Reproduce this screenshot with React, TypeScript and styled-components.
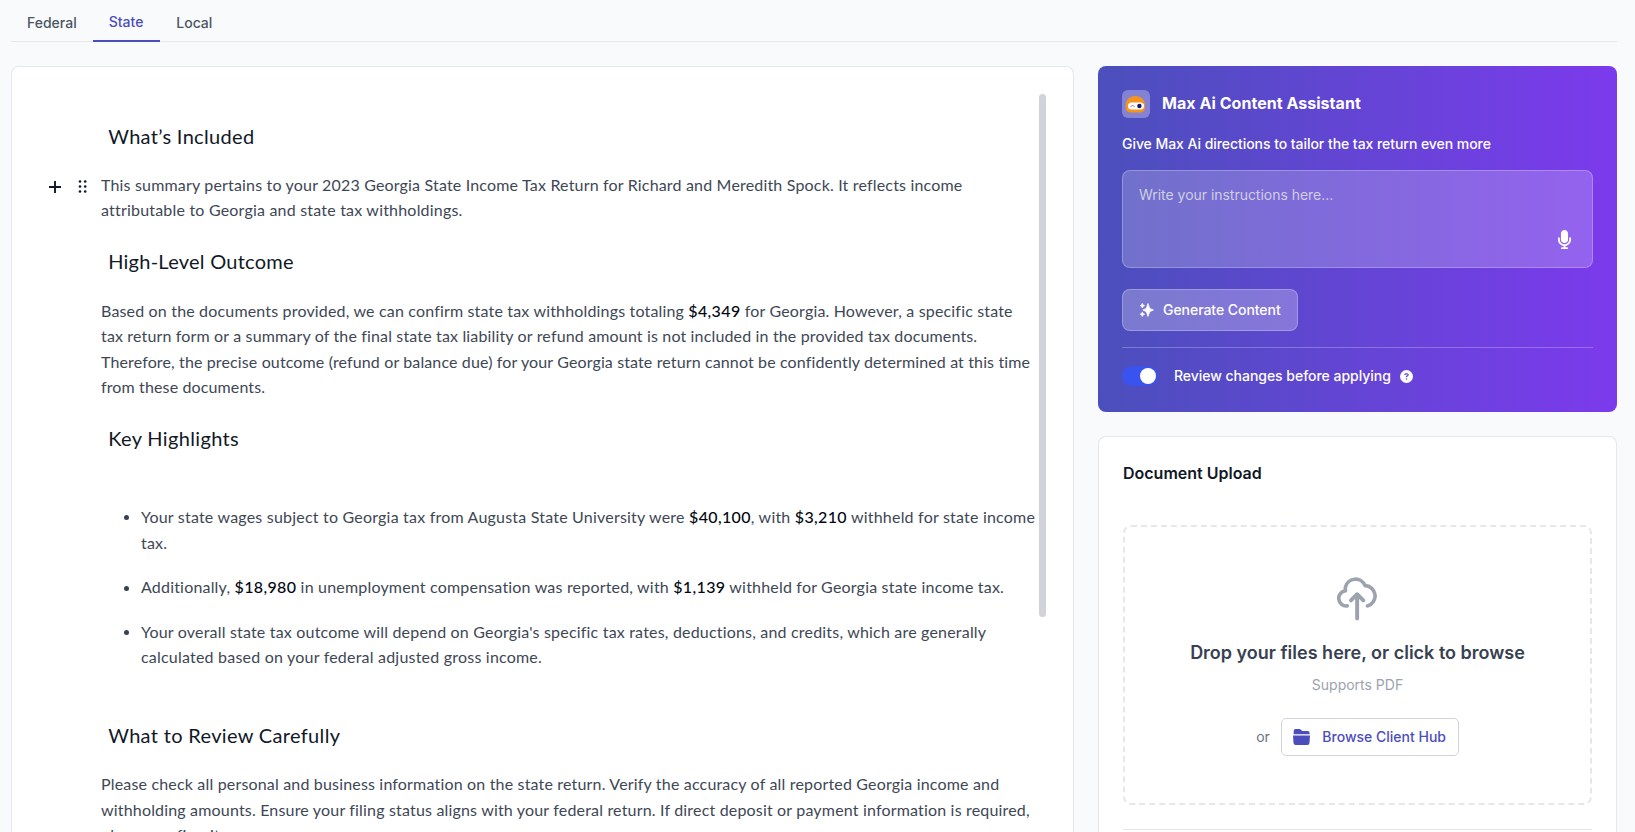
import React from "react";
import styled, { createGlobalStyle } from "styled-components";
import { FaMicrophone, FaCircleQuestion } from "react-icons/fa6";

const brand = "#4b4dbd";

const GlobalStyle = createGlobalStyle`
  *, *::before, *::after { box-sizing: border-box; }
  body {
    margin: 0;
    background: #f9fafb;
    font-family: Inter, "Liberation Sans", sans-serif;
    overflow: hidden;
  }
  h2, h3, p, ul { margin: 0; padding: 0; font-weight: inherit; }
  button, textarea { font: inherit; margin: 0; }
`;

const Page = styled.div`
  height: 100vh;
  padding: 0 18px 0 11px;
  overflow: hidden;
  display: flex;
  flex-direction: column;
  gap: 24px;
`;

const Tabs = styled.nav`
  flex: none;
  height: 42px;
  display: flex;
  border-bottom: 1px solid #e5e7eb;
`;

const Tab = styled.a<{ $active?: boolean }>`
  height: 42px;
  min-width: 67.6px;
  padding: ${(p) => (p.$active ? "12px" : "13px")} 16px 0;
  font-size: 14px;
  line-height: 20px;
  font-weight: 500;
  color: ${(p) => (p.$active ? brand : "#4b5563")};
  border-bottom: ${(p) => (p.$active ? `2px solid ${brand}` : "0")};
`;

const Columns = styled.main`
  flex: 1;
  min-height: 0;
  display: grid;
  grid-template-columns: 1063px 519px;
  gap: 24px;
`;

const EditorCard = styled.section`
  display: flex;
  min-height: 0;
  padding: 27px 27px 0 0;
  background: #fff;
  border: 1px solid #e5e7eb;
  border-bottom: 0;
  border-radius: 8px 8px 0 0;
`;

const Editor = styled.div`
  flex: 1;
  min-width: 0;
  overflow: hidden;
  padding-top: 28px;
  font-family: Lato, "Liberation Sans", sans-serif;
`;

const ScrollThumb = styled.div`
  flex: none;
  width: 7px;
  height: 523px;
  border-radius: 4px;
  background: #d1d3d9;
`;

const Block = styled.div`
  display: grid;
  grid-template-columns: 89px 1fr;
`;

const Gutter = styled.div`
  display: flex;
  align-items: center;
  justify-content: space-between;
  height: 30px;
  padding: 0 14px 0 37px;
`;

const Heading = styled.h2<{ $track: number }>`
  margin: 24.2px 0 22.6px 7.2px;
  font-size: 20px;
  line-height: 28px;
  letter-spacing: ${(p) => p.$track}px;
  color: #111827;
  ${Block}:first-child > & { margin-top: 0; margin-bottom: 21.6px; }
`;

const Paragraph = styled.p`
  font-size: 16px;
  line-height: 25.6px;
  color: #3e4755;
`;

const Line = styled.span<{ $track: number }>`
  display: block;
  white-space: nowrap;
  letter-spacing: ${(p) => p.$track}px;
`;

const Amount = styled.strong`
  font-weight: 500;
  letter-spacing: 0.35px;
  color: #030712;
`;

const Bullets = styled.ul`
  display: flex;
  flex-direction: column;
  gap: 19px;
  margin: 29.2px 0 26.6px;
  list-style: none;
`;

const Bullet = styled.li`
  display: grid;
  grid-template-columns: 40px 1fr;
  font-size: 16px;
  line-height: 25.6px;
  color: #3e4755;
  &::before {
    content: "";
    width: 5px;
    height: 5px;
    margin: 11.5px 0 0 23px;
    border-radius: 50%;
    background: #374151;
  }
`;

const Sidebar = styled.aside`
  display: flex;
  flex-direction: column;
  gap: 24px;
  min-height: 0;
`;

const Assistant = styled.section`
  flex: none;
  height: 346px;
  padding: 24px;
  border-radius: 8px;
  background: linear-gradient(to right, #4b4fbc, #7c3aed);
  color: #fff;
`;

const AssistantHeader = styled.header`
  display: flex;
  align-items: center;
  gap: 12px;
`;

const Avatar = styled.div`
  width: 28px;
  height: 28px;
  border-radius: 6px;
  background: rgba(255, 255, 255, 0.3);
  svg { display: block; }
`;

const AssistantTitle = styled.h3`
  margin-bottom: 2px;
  font-size: 16px;
  line-height: 24px;
  font-weight: 700;
  letter-spacing: 0.04px;
`;

const AssistantHint = styled.p`
  margin: 16px 0;
  font-size: 14px;
  line-height: 20px;
  font-weight: 500;
  letter-spacing: -0.05px;
`;

const Prompt = styled.div`
  display: flex;
  justify-content: space-between;
  height: 98px;
  padding: 14px 18px 18.5px 16px;
  border: 1px solid rgba(255, 255, 255, 0.25);
  border-radius: 8px;
  background: rgba(255, 255, 255, 0.2);
  svg { align-self: flex-end; }
`;

const Placeholder = styled.span`
  font-size: 14px;
  line-height: 20px;
  letter-spacing: -0.03px;
  color: #cfcfe2;
`;

const GenerateButton = styled.button`
  display: flex;
  align-items: center;
  gap: 9px;
  width: 176px;
  height: 42px;
  margin: 21px 0 16px;
  padding: 0 0 0 17px;
  border: 1px solid rgba(255, 255, 255, 0.25);
  border-radius: 8px;
  background: rgba(255, 255, 255, 0.25);
  color: #fff;
  font-size: 14px;
  line-height: 20px;
  font-weight: 500;
  letter-spacing: -0.05px;
`;

const ReviewRow = styled.div`
  display: flex;
  align-items: center;
  height: 41px;
  padding-top: 16px;
  border-top: 1px solid rgba(255, 255, 255, 0.25);
  font-size: 14px;
  line-height: 20px;
  font-weight: 500;
`;

const Toggle = styled.span`
  display: flex;
  justify-content: flex-end;
  width: 36px;
  height: 20px;
  padding: 2px;
  border-radius: 10px;
  background: #3b53ee;
  &::after {
    content: "";
    width: 16px;
    height: 16px;
    border-radius: 50%;
    background: #fff;
  }
`;

const ReviewLabel = styled.span`
  margin: 0 9.5px 0 16px;
  letter-spacing: -0.03px;
`;

const UploadCard = styled.section`
  flex: 1;
  min-height: 0;
  padding: 24px 24px 0;
  border: 1px solid #e5e7eb;
  border-bottom: 0;
  border-radius: 8px 8px 0 0;
  background: #fff;
`;

const UploadTitle = styled.h3`
  font-size: 16px;
  line-height: 24px;
  font-weight: 600;
  color: #111827;
`;

const DropZone = styled.div`
  display: flex;
  flex-direction: column;
  align-items: center;
  height: 280px;
  margin: 40px 0 24px;
  padding-top: 48px;
  border: 2px dashed #e5e7eb;
  border-radius: 8px;
`;

const DropTitle = styled.p`
  margin-top: 18px;
  font-size: 18px;
  line-height: 28px;
  font-weight: 600;
  color: #374151;
`;

const DropHint = styled.p`
  margin-top: 8px;
  font-size: 14px;
  line-height: 20px;
  color: #9ca3af;
`;

const HubRow = styled.div`
  display: flex;
  align-items: center;
  gap: 11px;
  margin-top: 23px;
  font-size: 14px;
  line-height: 20px;
  color: #6b7280;
`;

const HubButton = styled.button`
  display: flex;
  align-items: center;
  gap: 12px;
  width: 178px;
  height: 38px;
  padding: 0 0 0 11.5px;
  border: 1px solid #d1d5db;
  border-radius: 5px;
  background: #fff;
  color: ${brand};
  font-weight: 500;
`;

const Divider = styled.div`
  height: 1px;
  background: #e5e7eb;
`;

const PlusIcon = () => (
  <svg width="12" height="12" viewBox="0 0 12 12" stroke="#111827" strokeWidth="1.9">
    <path d="M6 0V12M0 6H12" />
  </svg>
);

const DragIcon = () => (
  <svg width="9" height="13" viewBox="0 0 9 13" fill="#111827">
    {[1.5, 6.5, 11.5].map((y) => (
      <React.Fragment key={y}>
        <circle cx="2" cy={y} r="1.3" />
        <circle cx="7.2" cy={y} r="1.3" />
      </React.Fragment>
    ))}
  </svg>
);

const RobotIcon = () => (
  <svg width="28" height="28" viewBox="0 0 28 28">
    <path d="M3.7 15.5C3.7 9.8 8 6 13.4 6S23 9.8 23 15.5V17.5C23 20.6 21 22.6 18 22.6H8.7C5.7 22.6 3.7 20.6 3.7 17.5Z" fill="#f7941d" />
    <rect x="6" y="12.6" width="16" height="7" rx="3.5" fill="#fff" />
    <circle cx="17.4" cy="16" r="2.2" fill="#1b1464" />
    <path d="M8.8 17C9.3 15 11.7 15 12.3 17" fill="none" stroke="#6b68a8" strokeWidth="0.9" />
  </svg>
);

const SparkleIcon = () => (
  <svg width="14" height="14" viewBox="0 0 14 14" fill="#fff" stroke="#fff" strokeWidth=".7" strokeLinejoin="round">
    <path d="M8 .5C8.5 .5 8.9 4.2 9.8 5.2S13.5 6.5 13.5 7 10.7 7.8 9.8 8.8 8.5 13.5 8 13.5 7.1 9.8 6.2 8.8 2.9 7.5 2.9 7 5.3 6.2 6.2 5.2 7.5 .5 8 .5Z" />
    <path d="M2.3 .4L3 2 4.6 2.7 3 3.4 2.3 5 1.6 3.4 .2 2.7 1.6 2ZM2.3 8.900L3 10.5 4.6 11.2 3 11.9 2.3 13.5 1.6 11.9 .2 11.2 1.6 10.5Z" />
  </svg>
);

const CloudUploadIcon = () => (
  <svg width="42" height="46" viewBox="21.500 20 122 134" fill="none" stroke="#9ca3af" strokeLinecap="round" strokeLinejoin="round">
    <path strokeWidth="10.5" d="M51 110A22 22 0 0 1 46 66Q45 62 46 55A30 30 0 0 1 103 51A30 30 0 0 1 110 110" />
    <path strokeWidth="11.5" d="M80 147V77M62 94L80 76 98 94" />
  </svg>
);

const FolderIcon = () => (
  <svg width="17" height="16" viewBox="53 52 50 46" fill={brand} preserveAspectRatio="none">
    <path d="M55 67V58Q55 52 61 52H71Q75 52 77 55T82 58H96Q102 58 102 64V67Z" />
    <path d="M53 71H103L101.5 92Q101 98 95 98H61Q55 98 54.5 92Z" />
  </svg>
);

export default function App() {
  return (
    <>
      <GlobalStyle />
      <Page>
        <Tabs>
          <Tab>Federal</Tab>
          <Tab $active>State</Tab>
          <Tab>Local</Tab>
        </Tabs>
        <Columns>
          <EditorCard>
            <Editor>
              <Block>
                <span />
                <Heading $track={0.33}>What’s Included</Heading>
              </Block>
              <Block>
                <Gutter>
                  <PlusIcon />
                  <DragIcon />
                </Gutter>
                <Paragraph>
                  <Line $track={0.176}>
                    This summary pertains to your 2023 Georgia State Income Tax Return for Richard and Meredith Spock. It reflects income
                  </Line>
                  <Line $track={0.2}>attributable to Georgia and state tax withholdings.</Line>
                </Paragraph>
              </Block>
              <Block>
                <span />
                <Heading $track={0.25}>High-Level Outcome</Heading>
              </Block>
              <Block>
                <span />
                <Paragraph>
                  <Line $track={0.17}>
                    Based on the documents provided, we can confirm state tax withholdings totaling <Amount>$4,349</Amount> for Georgia. However, a specific state
                  </Line>
                  <Line $track={0.153}>
                    tax return form or a summary of the final state tax liability or refund amount is not included in the provided tax documents.
                  </Line>
                  <Line $track={0.128}>
                    Therefore, the precise outcome (refund or balance due) for your Georgia state return cannot be confidently determined at this time
                  </Line>
                  <Line $track={0.13}>from these documents.</Line>
                </Paragraph>
              </Block>
              <Block>
                <span />
                <Heading $track={0.35}>Key Highlights</Heading>
              </Block>
              <Block>
                <span />
                <Bullets>
                  <Bullet>
                    <div>
                      <Line $track={0.205}>
                        Your state wages subject to Georgia tax from Augusta State University were <Amount>$40,100</Amount>, with <Amount>$3,210</Amount> withheld for state income
                      </Line>
                      <Line $track={0.2}>tax.</Line>
                    </div>
                  </Bullet>
                  <Bullet>
                    <Line $track={0.19}>
                      Additionally, <Amount>$18,980</Amount> in unemployment compensation was reported, with <Amount>$1,139</Amount> withheld for Georgia state income tax.
                    </Line>
                  </Bullet>
                  <Bullet>
                    <div>
                      <Line $track={0.19}>
                        Your overall state tax outcome will depend on Georgia's specific tax rates, deductions, and credits, which are generally
                      </Line>
                      <Line $track={0.21}>calculated based on your federal adjusted gross income.</Line>
                    </div>
                  </Bullet>
                </Bullets>
              </Block>
              <Block>
                <span />
                <Heading $track={0.33}>What to Review Carefully</Heading>
              </Block>
              <Block>
                <span />
                <Paragraph>
                  <Line $track={0.175}>
                    Please check all personal and business information on the state return. Verify the accuracy of all reported Georgia income and
                  </Line>
                  <Line $track={0.177}>
                    withholding amounts. Ensure your filing status aligns with your federal return. If direct deposit or payment information is required,
                  </Line>
                  <Line $track={0.17}>please confirm it.</Line>
                </Paragraph>
              </Block>
            </Editor>
            <ScrollThumb />
          </EditorCard>
          <Sidebar>
            <Assistant>
              <AssistantHeader>
                <Avatar>
                  <RobotIcon />
                </Avatar>
                <AssistantTitle>Max Ai Content Assistant</AssistantTitle>
              </AssistantHeader>
              <AssistantHint>Give Max Ai directions to tailor the tax return even more</AssistantHint>
              <Prompt>
                <Placeholder>Write your instructions here...</Placeholder>
                <FaMicrophone size={19} />
              </Prompt>
              <GenerateButton>
                <SparkleIcon />
                Generate Content
              </GenerateButton>
              <ReviewRow>
                <Toggle />
                <ReviewLabel>Review changes before applying</ReviewLabel>
                <FaCircleQuestion size={13} />
              </ReviewRow>
            </Assistant>
            <UploadCard>
              <UploadTitle>Document Upload</UploadTitle>
              <DropZone>
                <CloudUploadIcon />
                <DropTitle>Drop your files here, or click to browse</DropTitle>
                <DropHint>Supports PDF</DropHint>
                <HubRow>
                  or
                  <HubButton>
                    <FolderIcon />
                    Browse Client Hub
                  </HubButton>
                </HubRow>
              </DropZone>
              <Divider />
            </UploadCard>
          </Sidebar>
        </Columns>
      </Page>
    </>
  );
}
